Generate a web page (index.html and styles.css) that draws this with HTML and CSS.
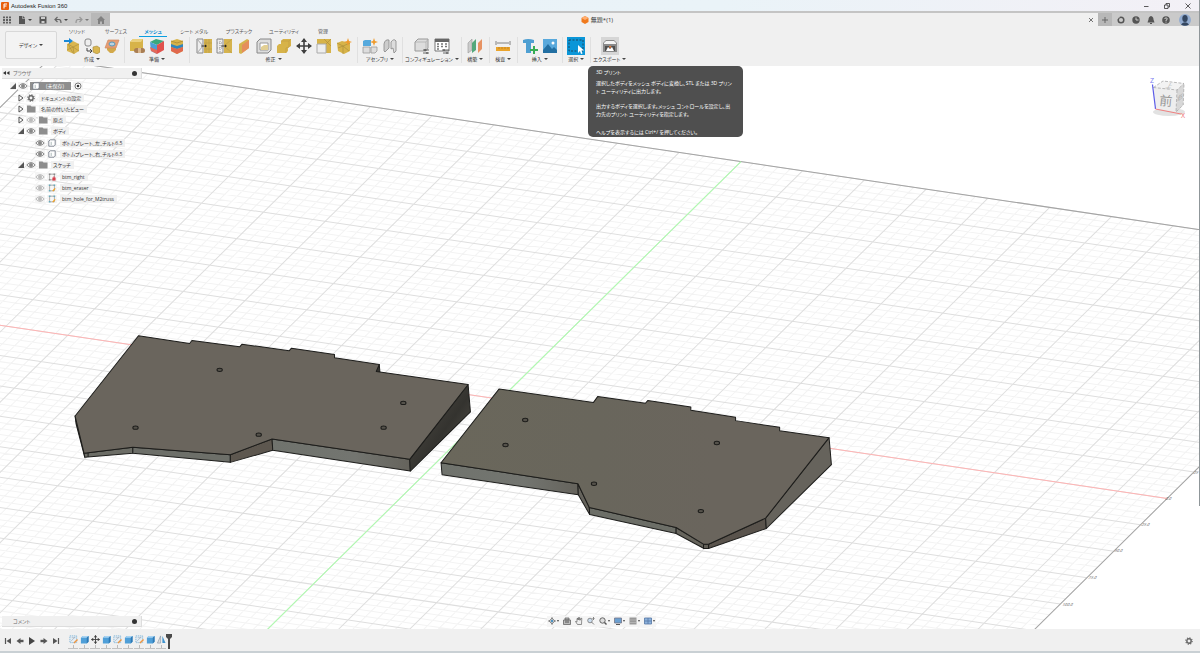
FILE: index.html
```html
<!DOCTYPE html>
<html lang="ja">
<head>
<meta charset="utf-8">
<title>Autodesk Fusion 360</title>
<link rel="stylesheet" href="styles.css">
</head>
<body>
<svg class="defs" aria-hidden="true">
  <defs>
    <linearGradient id="sideDark" x1="0" y1="0" x2="1" y2="1"><stop offset="0" stop-color="#55524b"/><stop offset=".55" stop-color="#34332f"/><stop offset="1" stop-color="#5c5952"/></linearGradient>
    <linearGradient id="topRight" x1="0" y1="0" x2="1" y2="0"><stop offset="0" stop-color="#6a675b"/><stop offset=".4" stop-color="#69665c"/><stop offset=".7" stop-color="#6a655d"/></linearGradient>
    <linearGradient id="front" x1="0" y1="0" x2="1" y2="0"><stop offset="0" stop-color="#70736d"/><stop offset=".6" stop-color="#737570"/><stop offset="1" stop-color="#65635c"/></linearGradient>
  </defs>
  <symbol id="eye" viewBox="0 0 10 8"><path d="M.8 4Q5-.8 9.200 4 5 8.800.8 4z" fill="none" stroke="currentColor"/><circle cx="5" cy="4" r="2" fill="currentColor"/></symbol>
  <symbol id="folder" viewBox="0 0 10 8"><path d="M1 .5h3.500l1 1H9.500V7.500H1z" fill="#8d8d8d"/></symbol>
  <symbol id="gear" viewBox="0 0 10 10"><circle cx="5" cy="5" r="2.700" fill="none" stroke="#666" stroke-width="1.800"/><circle cx="5" cy="5" r="4" fill="none" stroke="#666" stroke-width="1.400" stroke-dasharray="1.500 1.640"/></symbol>
  <symbol id="closed" viewBox="0 0 6 8"><path d="M1 1l4 3-4 3z" fill="#fff" stroke="#555"/></symbol>
  <symbol id="open" viewBox="0 0 6 8"><path d="M6 1v6H0z" fill="#555"/></symbol>
  <symbol id="body" viewBox="0 0 10 10"><path d="M1 2.500L3 1h6v6.500L7.500 9H1z" fill="#fff" stroke="#6a7280"/><path d="M4 3.500v4" stroke="#9aa" fill="none"/></symbol>
  <symbol id="sketch" viewBox="0 0 10 10"><path d="M2 1.500v7h6v-7z" fill="#f7f7f7" stroke="#888" stroke-width=".8"/><path d="M1 .5h2v2H1zM7 .5h2v2H7zM1 7.500h2v2H1z" fill="#6ab"/><path d="M6 9l3-3.500" stroke="#f0a020" stroke-width="1.600"/></symbol>
  <symbol id="sketchlock" viewBox="0 0 10 10"><path d="M2 1.500v7h6v-7z" fill="#f7f7f7" stroke="#888" stroke-width=".8"/><path d="M1 .5h2v2H1zM7 .5h2v2H7zM1 7.500h2v2H1z" fill="#888"/><path d="M5.500 6h4v3.500h-4z" fill="#d9404c"/><path d="M6.500 6V5h2v1" stroke="#d9404c" fill="none"/></symbol>
  <symbol id="tsketch" viewBox="0 0 10 10"><path d="M1 1h7.500v7.500H1z" fill="#e6eef4" stroke="#7fb4d8" stroke-dasharray="1.500 .8"/><path d="M2 7l5-5M3 3h4" stroke="#9ab" stroke-width=".7"/><path d="M5.500 9l4-4" stroke="#ee9540" stroke-width="1.600"/></symbol>
  <symbol id="extrude" viewBox="0 0 10 10"><path d="M1 3l2-2h6.500v6.500l-2 2H1z" fill="#4f9fd8"/><path d="M1 3l2-2h6.500l-2 2z" fill="#a8d3f2"/><path d="M7.500 3l2-2v6.500l-2 2z" fill="#2f79b4"/></symbol>
  <symbol id="move" viewBox="0 0 16 16"><path d="M8 1v14M1 8h14" stroke="#3f3f3f" stroke-width="1.600"/><path d="M8 0l3 4H5zM8 16l3-4H5zM0 8l4-3v6zM16 8l-4-3v6z" fill="#3f3f3f"/></symbol>
  <symbol id="step" viewBox="0 0 10 8"><path d="M1.500 4l4-3v6z" fill="#555"/><path d="M5 4h3.500" stroke="#555" stroke-width="2.400"/></symbol>
  <symbol id="skip" viewBox="0 0 10 8"><path d="M2.500 1v6" stroke="#555" stroke-width="1.200"/><path d="M3.500 4L8 1v6z" fill="#555"/></symbol>
</svg>

<div class="app">
  <header class="titlebar">
    <svg class="i8" viewBox="0 0 8 8"><rect width="8" height="8" rx="1" fill="#e8600c"/><path d="M3 6.500V2h3M3 4h2.500" stroke="#fff" fill="none"/></svg>
    <span class="apptitle">Autodesk Fusion 360</span>
    <div class="winbtns">
      <button aria-label="最小化"><svg class="i8" viewBox="0 0 8 8"><path d="M2 4.500h4.500" stroke="#333" stroke-width=".8"/></svg></button>
      <button aria-label="元に戻す"><svg class="i8" viewBox="0 0 8 8"><path d="M1.500 3h3.500v3.500H1.500zM3 3V1.500h3.500V5H5" stroke="#333" stroke-width=".8" fill="none"/></svg></button>
      <button aria-label="閉じる"><svg class="i8" viewBox="0 0 8 8"><path d="M1.500 1.500l5 5M6.500 1.500l-5 5" stroke="#333" stroke-width=".8"/></svg></button>
    </div>
  </header>

  <div class="tabstrip">
    <div class="quick">
      <button aria-label="データ パネル"><svg class="i8" viewBox="0 0 8 8"><path d="M1 .5v7M4 .5v7M7 .5v7" stroke="#555" stroke-width="1.800" stroke-dasharray="1.800 .8"/></svg></button>
      <button class="drop" aria-label="ファイル"><svg class="i8" viewBox="0 0 8 8"><path d="M1 0h4l2 2v6H1z" fill="#555"/><path d="M4.500 0v2.500H7" stroke="#ccc" stroke-width=".6" fill="none"/></svg><i class="caret"></i></button>
      <button aria-label="保存"><svg class="i8" viewBox="0 0 8 8"><path d="M.5.500h7v7h-7z" fill="#555"/><path d="M2 1h4v2H2zM2.500 5h3v2h-3z" fill="#ccc"/></svg></button>
      <button class="drop" aria-label="元に戻す"><svg class="i8" viewBox="0 0 8 8"><path d="M3.500 1L1 3.500 3.500 6M1 3.500h4Q7 3.500 7 7" stroke="#666" stroke-width="1.200" fill="none"/></svg><i class="caret"></i></button>
      <button class="drop faded" aria-label="やり直し"><svg class="i8" viewBox="0 0 8 8"><path d="M4.500 1L7 3.500 4.500 6M7 3.500H3Q1 3.500 1 7" stroke="#777" stroke-width="1.200" fill="none"/></svg><i class="caret"></i></button>
    </div>
    <button class="home" aria-label="ホーム"><svg class="i8" viewBox="0 0 8 8"><path d="M4 0l4 4H7v4H5V5.500H3V8H1V4H0z" fill="#808080"/></svg></button>
    <div class="doctab">
      <span class="docname"><svg class="i8" viewBox="0 0 8 8"><path d="M4 0l3.500 2v4L4 8 .5 6V2z" fill="#f07a1e"/><path d="M4 0l3.500 2L4 4 .5 2z" fill="#ffae70"/></svg>無題*(1)</span>
      <button class="closetab" aria-label="タブを閉じる"><svg class="i8" viewBox="0 0 8 8"><path d="M2 2l4 4M6 2L2 6" stroke="#555" stroke-width=".8"/></svg></button>
    </div>
    <button class="plus" aria-label="新規"><svg class="i8" viewBox="0 0 8 8"><path d="M4 1v6M1 4h6" stroke="#666"/></svg></button>
    <div class="account">
      <button aria-label="拡張機能"><svg class="i8" viewBox="0 0 8 8"><circle cx="4" cy="4" r="2.800" fill="none" stroke="#555" stroke-width="1.500"/><path d="M0 3l3-2.500" stroke="#ccc"/></svg></button>
      <button aria-label="ジョブ"><svg class="i8" viewBox="0 0 8 8"><circle cx="4" cy="4" r="3.700" fill="#555"/><path d="M4 1.500V4h2.500" stroke="#ccc" fill="none"/></svg></button>
      <button aria-label="通知"><svg class="i8" viewBox="0 0 8 8"><path d="M4 0q2.500.5 2.500 3.500L7.500 6.500H.5L1.500 3.500Q1.500.500 4 0zM3 7h2v1H3z" fill="#555"/></svg></button>
      <button aria-label="ヘルプ"><svg class="i8" viewBox="0 0 8 8"><circle cx="4" cy="4" r="3.800" fill="#555"/><path d="M2.700 3Q3 1.800 4 1.800t1.300 1.100Q5.300 3.700 4 4.200V5M4 5.600v1" stroke="#ddd" stroke-width=".9" fill="none"/></svg></button>
      <button class="avatar" aria-label="アカウント"><svg viewBox="0 0 12 12"><circle cx="6" cy="6" r="6" fill="#93acd0"/><ellipse cx="6" cy="4.500" rx="2.700" ry="3.500" fill="#34465f"/><path d="M2 10.500Q6 6 10 10.500 6 13 2 10.500z" fill="#34465f"/></svg></button>
    </div>
  </div>

  <div class="toolbar">
    <button class="workspace">デザイン<i class="caret"></i></button>
    <div class="ribbon">
      <nav class="tabs">
        <button class="w38">ソリッド</button><button class="w40">サーフェス</button><button class="w34 active">メッシュ</button><button class="w48">シート メタル</button><button class="w42">プラスチック</button><button class="w48">ユーティリティ</button><button class="w30">管理</button>
      </nav>
      <div class="groups">
        <section class="group">
          <div class="icons">
            <button aria-label="メッシュを挿入"><svg viewBox="0 0 16 16"><path d="M3 6l6-3 6 3v7l-5 3-7-3z" fill="#d9b650"/><path d="M4 6l5 3 6-3M9 9l1 7M4 6l5 9M9 9l6 4M3 12l6-3" stroke="#a98c3a" stroke-width=".6" fill="none"/><path d="M0 3h7" stroke="#1989d8" stroke-width="2"/><path d="M5 0l4 3-4 3z" fill="#1989d8"/></svg></button>
            <button aria-label="テッセレート"><svg viewBox="0 0 16 16"><rect x="1" y="1" width="6" height="7" rx="2" fill="#eee" stroke="#888"/><path d="M3 10v3h4M6 11l2 2-2 2" stroke="#444" fill="none"/><path d="M9 9l4-1 3 2v4l-3 2-4-2z" fill="#d9b650" stroke="#a58737" stroke-width=".6"/></svg></button>
            <button aria-label="メッシュ断面"><svg viewBox="0 0 16 16"><path d="M3 8h9v4l-3 3H6l-3-3z" fill="#d3a94b"/><path d="M4 2h11l-3 8H1z" fill="#e79d74" stroke="#d08a60" stroke-width=".7"/><ellipse cx="8" cy="6" rx="3" ry="2" fill="#bcd2de" stroke="#5597ba"/></svg></button>
          </div><span class="glabel">作成<i class="caret"></i></span>
        </section>
        <section class="group">
          <div class="icons">
            <button aria-label="修復"><svg viewBox="0 0 16 16"><path d="M1 4l3-3h10v9l-2 3H1z" fill="#d7b349"/><path d="M1 4l3-3h10l-2 3z" fill="#ead07e"/><rect x="5" y="10" width="11" height="5" rx="2.500" fill="#a97e53"/><path d="M9 10h3v5H9z" fill="#d9b68d"/></svg></button>
            <button aria-label="面グループを生成"><svg viewBox="0 0 16 16"><path d="M1 4l6-3 8 2-7 4z" fill="#3aa87d"/><path d="M1 4l7 3v9l-6-3z" fill="#4b9fd5"/><path d="M8 7l7-4v9l-7 4z" fill="#e0524c"/><path d="M1 9l7 3v4l-6-3z" fill="#e26a5b"/></svg></button>
            <button aria-label="面グループを結合"><svg viewBox="0 0 16 16"><path d="M2 3l6-2 6 2v10l-6 3-6-3z" fill="#d7b349"/><path d="M2 6l6 2 6-2v3l-6 2-6-2z" fill="#3186bd"/><path d="M2 9l6 2 6-2v4l-6 3-6-3z" fill="#e0684e"/><path d="M2 3l6 2 6-2" stroke="#a48431" stroke-width=".7" fill="none"/></svg></button>
          </div><span class="glabel">準備<i class="caret"></i></span>
        </section>
        <section class="group wide">
          <div class="icons">
            <button aria-label="リメッシュ"><svg viewBox="0 0 16 16"><path d="M1 1h6v14H1z" fill="#eee" stroke="#888"/><path d="M1 1l6 7-6 7" stroke="#aaa" fill="none"/><path d="M8 1h8v14H8z" fill="#d5b34e"/><path d="M10 1v14M13 1v14M8 5h8M8 11h8" stroke="#b99c46" stroke-width=".6"/><path d="M5 8h4" stroke="#222" stroke-width=".8"/><path d="M9 6.500L11 8 9 9.500z" fill="#222"/></svg></button>
            <button aria-label="削減"><svg viewBox="0 0 16 16"><path d="M1 1h6v14H1z" fill="#eee" stroke="#888"/><path d="M4 1v14M1 5h6M1 10h6" stroke="#999" stroke-dasharray="1 1" fill="none"/><path d="M8 1h8v14H8z" fill="#d5b34e"/><path d="M16 1L8 8l8 7" stroke="#b99c46" stroke-width=".6" fill="none"/><path d="M5 8h4" stroke="#222" stroke-width=".8"/><path d="M9 6.500L11 8 9 9.500z" fill="#222"/></svg></button>
            <button aria-label="平面切断"><svg viewBox="0 0 16 16"><path d="M3 6l8-5 2 1v8l-8 6-2-1z" fill="#d5b34e"/><path d="M6 7l7-5v8l-7 5z" fill="#e58e5c"/></svg></button>
            <button aria-label="シェル"><svg viewBox="0 0 16 16"><path d="M1 4l3-3h11v11l-3 3H1z" fill="#ddd" stroke="#888"/><path d="M4 5h8v7H4z" fill="#fff" stroke="#999"/><path d="M5 12V9l3-2h4v5z" fill="#e2cf94"/></svg></button>
            <button aria-label="結合"><svg viewBox="0 0 16 16"><path d="M5 3l2-2h8v7l-3 2v3l-2 2H1V8l2-2h2z" fill="#d7b349"/><path d="M5 3h8l2-2M13 3v6l-3 1v5" stroke="#c29f42" stroke-width=".7" fill="none"/></svg></button>
            <button aria-label="移動"><svg viewBox="0 0 16 16"><use href="#move"/></svg></button>
            <button aria-label="尺度"><svg viewBox="0 0 16 16"><path d="M1 1h14v14H1z" fill="#d7b349"/><path d="M1 6h9v9H1z" fill="#eee" stroke="#aaa"/><path d="M8 1l7 7M10 6l5-5" stroke="#a98c3a" stroke-width=".6"/></svg></button>
            <button aria-label="変換"><svg viewBox="0 0 16 16"><path d="M1 5l5-2 8 2v8l-6 3-6-3z" fill="#d7b349"/><path d="M1 5l6 3 7-3M7 8v8M2 10l5-2 6 5" stroke="#ac8f3c" stroke-width=".7" fill="none"/><path d="M12 0l1 3 3 1-3 1-1 3-1-3-3-1 3-1z" fill="#ef9b2d"/></svg></button>
          </div><span class="glabel">修正<i class="caret"></i></span>
        </section>
        <section class="group">
          <div class="icons">
            <button aria-label="新規コンポーネント"><svg viewBox="0 0 16 16"><path d="M1 3l2-1h6v6H1z" fill="#55a9dd"/><path d="M1 9h7v6H1zM9 9h6v4l-2 2H9z" fill="#ddd" stroke="#999" stroke-width=".8"/><path d="M12 0l1 3 3 1-3 1-1 3-1-3-3-1 3-1z" fill="#ef9b2d"/></svg></button>
            <button aria-label="ジョイント"><svg viewBox="0 0 16 16"><path d="M2 6q1-5 5-4v8l-4 4-1-1z" fill="#ccc" stroke="#888" stroke-width=".8"/><path d="M9 4q3-4 5-1v10l-2 2-1-5-2 1z" fill="#ddd" stroke="#888" stroke-width=".8"/></svg></button>
          </div><span class="glabel">アセンブリ<i class="caret"></i></span>
        </section>
        <section class="group tight">
          <div class="icons">
            <button aria-label="設定を作成"><svg viewBox="0 0 16 16"><path d="M1 4l3-3h10v9l-2 3H1z" fill="#ddd" stroke="#999"/><path d="M1 4h11l2-3M12 4v9" stroke="#aaa" stroke-width=".7" fill="none"/><path d="M9 12h6M9 15h6" stroke="#444" stroke-width=".8"/><path d="M11 11v2M13 14v2" stroke="#444"/></svg></button>
            <button aria-label="テーブル"><svg viewBox="0 0 16 16"><path d="M1 1h14v12H1z" fill="#fff" stroke="#777"/><path d="M1 1h14v3H1z" fill="#666"/><path d="M3 6h2M7 6h2M11 6h2M3 8.500h2M7 8.500h2M11 8.500h2M3 11h2" stroke="#777" stroke-width="1.300"/><path d="M8 12h7M9 15h6" stroke="#444" stroke-width=".8"/><path d="M10 11v2M13 14v2" stroke="#444"/></svg></button>
          </div><span class="glabel">コンフィギュレーション<i class="caret"></i></span>
        </section>
        <section class="group">
          <div class="icons"><button aria-label="オフセット平面"><svg viewBox="0 0 16 16"><path d="M1 5l4-4v11l-4 3z" fill="#ccc" stroke="#999" stroke-width=".6"/><path d="M5 5l4-4v11l-4 3z" fill="#53a87c"/><path d="M11 5l4-4v10l-4 4z" fill="#e79363"/></svg></button></div><span class="glabel">構築<i class="caret"></i></span>
        </section>
        <section class="group">
          <div class="icons"><button aria-label="計測"><svg viewBox="0 0 16 16"><path d="M1 3v4M15 3v4M2 5h12" stroke="#666" stroke-width=".8"/><path d="M1 9h14v4H1z" fill="#eaa42c"/><path d="M4 9v2M7 9v2M10 9v2M13 9v2" stroke="#b5791c" stroke-width=".7"/></svg></button></div><span class="glabel">検査<i class="caret"></i></span>
        </section>
        <section class="group">
          <div class="icons">
            <button aria-label="部品を挿入"><svg viewBox="0 0 16 16"><path d="M1 2q5-2 11 0v3H9v10H4V5H1z" fill="#4e9fd2"/><path d="M12 8v8M8 12h8" stroke="#37ad54" stroke-width="2"/></svg></button>
            <button aria-label="キャンバス"><svg viewBox="0 0 16 16"><path d="M1 1h14v14H1z" fill="#59a9dc"/><path d="M1 12l5-6 4 5 2-2 3 3v3H1z" fill="#226fa2"/><circle cx="11" cy="5" r="1.500" fill="#fff"/></svg></button>
          </div><span class="glabel">挿入<i class="caret"></i></span>
        </section>
        <section class="group">
          <div class="icons"><button class="selected" aria-label="選択"><svg viewBox="0 0 18 18"><path d="M2 3h14v11H2z" fill="none" stroke="#234" stroke-width=".8" stroke-dasharray="2 1.500"/><path d="M11 8v8l2-2 1 3 1.500-.6-1-2.900H17z" fill="#fff"/></svg></button></div><span class="glabel">選択<i class="caret"></i></span>
        </section>
        <section class="group">
          <div class="icons"><button class="hovered" aria-label="3D プリント"><svg viewBox="0 0 18 18"><path d="M2 6l3-3h8l3 3v9H2z" fill="#8a8a8a"/><path d="M3 6l2-2h8l2 2v1H3z" fill="#f4f4f4"/><path d="M4 9h10v5H4z" fill="#4f4f4f"/><path d="M5 14l2-4 2 2 2-2 2 4z" fill="#fff"/><path d="M8 9h2.500L9 12z" fill="#e37534"/></svg></button></div><span class="glabel">エクスポート<i class="caret"></i></span>
        </section>
      </div>
    </div>
  </div>

  <main class="workarea">
    <svg class="scene" viewBox="0 67 1200 562" preserveAspectRatio="xMidYMid slice">
      <path id="minor" class="minor"/><path id="major" class="major"/>
      <path id="border" class="border"/>
      <path id="xaxis" class="xaxis"/><path id="yaxis" class="yaxis"/>
      <g class="ticks">
        <text transform="translate(1164 500) skewX(-30)">0.0</text>
        <text transform="translate(1140 526) skewX(-30)">25.0</text>
        <text transform="translate(1113 552) skewX(-30)">50.0</text>
        <text transform="translate(1087 579) skewX(-30)">75.0</text>
        <text transform="translate(1061 606) skewX(-30)">100.0</text>
        <text transform="translate(1192 474) skewX(-30)">25</text>
      </g>
      <g class="solid" transform="translate(61 321) scale(.33333)">
        <path fill="#5f5c55" d="M45 286L72 398 74 409 48 310z"/>
        <path fill="#6c6d66" d="M72 398L218 380V398L74 410z"/>
        <path fill="#6d6f69" d="M218 380L510 402V425L218 398z"/>
        <path fill="#5d574f" d="M510 402L635 355 637 389 510 425z"/>
        <path fill="url(#front)" d="M635 355L1047 416 1049 451 637 389z"/>
        <path fill="url(#sideDark)" d="M1222 192L1229 274 1049 451 1047 416z"/>
        <path fill="#34332f" d="M956 132L958 155 944 152z"/>
        <path fill="#6a655d" d="M235 46L388 69 395 60 538 79 545 71 686 91 693 83 822 102V112L956 132 947 153 1222 192 1047 416 635 355 510 402 218 380 72 398 45 286z"/>
        <path d="M84 397v12" fill="none"/>
        <g class="holes"><ellipse cx="478" cy="148" rx="8" ry="5"/><ellipse cx="226" cy="321" rx="8" ry="5"/><ellipse cx="595" cy="342" rx="8" ry="5"/><ellipse cx="1028" cy="247" rx="8" ry="5"/><ellipse cx="969" cy="321" rx="8" ry="5"/></g>
      </g>
      <g class="solid" transform="translate(430 375) scale(.33333)">
        <path fill="url(#front)" d="M34 264L444 327 445 360 37 300z"/>
        <path fill="#65635c" d="M444 327L478 398 479 419 445 360z"/>
        <path fill="#6c6e67" d="M478 398L738 458V476L479 419z"/>
        <path fill="#66645c" d="M738 458L820 508V520L738 476z"/>
        <path fill="#625f57" d="M820 508H835V521H820z"/>
        <path fill="#59534c" d="M835 508L1006 430 1008 461 835 521z"/>
        <path fill="#66635c" d="M1196 189L1203 270 1008 461 1006 430z"/>
        <path fill="url(#topRight)" d="M208 43L490 84 503 66 646 86 653 78 782 97V107L916 128V138L1048 158V168L1196 189 1006 430 835 508H820L738 458 478 398 444 327 34 264z"/>
        <g class="holes"><ellipse cx="286" cy="136" rx="8" ry="5"/><ellipse cx="227" cy="211" rx="8" ry="5"/><ellipse cx="492" cy="327" rx="8" ry="5"/><ellipse cx="860" cy="205" rx="8" ry="5"/><ellipse cx="812" cy="409" rx="8" ry="5"/></g>
      </g>
    </svg>

    <div class="overlay">
      <aside class="browser">
        <div class="panelhead"><svg class="i8" viewBox="0 0 8 8"><path d="M4 2v4L1 4zM7.500 2v4l-3-2z" fill="#333"/></svg><span>ブラウザ</span><i class="dot"></i></div>
        <ul class="tree">
          <li><div class="row"><svg class="tri"><use href="#open"/></svg><svg class="ic dark"><use href="#eye"/></svg><span class="rootname"><svg class="ic"><use href="#body"/></svg>(未保存)</span><svg class="ic" viewBox="0 0 8 8"><circle cx="4" cy="4" r="3" fill="#fff" stroke="#444" stroke-width=".7"/><circle cx="4" cy="4" r="1.300" fill="#333"/></svg></div>
            <ul>
              <li><div class="row"><svg class="tri"><use href="#closed"/></svg><svg class="ic"><use href="#gear"/></svg><span>ドキュメントの設定</span></div></li>
              <li><div class="row"><svg class="tri"><use href="#closed"/></svg><svg class="ic"><use href="#folder"/></svg><span>名前の付いたビュー</span></div></li>
              <li><div class="row"><svg class="tri"><use href="#closed"/></svg><svg class="ic faint"><use href="#eye"/></svg><svg class="ic"><use href="#folder"/></svg><span>原点</span></div></li>
              <li><div class="row"><svg class="tri"><use href="#open"/></svg><svg class="ic dark"><use href="#eye"/></svg><svg class="ic"><use href="#folder"/></svg><span>ボディ</span></div>
                <ul class="leaf">
                  <li><div class="row"><svg class="ic dark"><use href="#eye"/></svg><svg class="ic"><use href="#body"/></svg><span>ボトムプレート_左_チルト6.5</span></div></li>
                  <li><div class="row"><svg class="ic dark"><use href="#eye"/></svg><svg class="ic"><use href="#body"/></svg><span>ボトムプレート_右_チルト6.5</span></div></li>
                </ul></li>
              <li><div class="row"><svg class="tri"><use href="#open"/></svg><svg class="ic dark"><use href="#eye"/></svg><svg class="ic"><use href="#folder"/></svg><span>スケッチ</span></div>
                <ul class="leaf">
                  <li><div class="row"><svg class="ic faint"><use href="#eye"/></svg><svg class="ic"><use href="#sketchlock"/></svg><span>btm_right</span></div></li>
                  <li><div class="row"><svg class="ic faint"><use href="#eye"/></svg><svg class="ic"><use href="#sketch"/></svg><span>btm_eraser</span></div></li>
                  <li><div class="row"><svg class="ic faint"><use href="#eye"/></svg><svg class="ic"><use href="#sketch"/></svg><span>btm_hole_for_M2truss</span></div></li>
                </ul></li>
            </ul></li>
        </ul>
      </aside>

      <svg class="cube" viewBox="0 0 46 48">
        <ellipse cx="24" cy="39" rx="16" ry="4" fill="#e2e2e2"/>
        <path d="M8.500 14.500L18 8l21 2.500-7 6.500z" fill="#f3f3f3"/><path d="M8.500 14.500l23.500 2.500-1 22-20.500-3.500z" fill="#eee"/><path d="M32 17l7-6.500-.8 21.500L31 39z" fill="#d8d8d8"/>
        <path d="M8.500 14.500L18 8l21 2.500-7 6.500zM32 17l-1 22 7.200-7 .8-21.500" fill="none" stroke="#aaa" stroke-width=".8" stroke-dasharray="3 1.500"/>
        <text class="cubeface" transform="translate(14 32) rotate(5)">前</text><text class="cubeside" transform="translate(20 15) skewX(-30)">上</text><text class="cubeside" transform="translate(32 29) skewY(-40)">右</text>
        <path d="M7.500 11.500l3 24.500" stroke="#5b5be8" stroke-width="1.200"/><path d="M10.500 36L36 41" stroke="#f08080"/>
        <text class="axis zc" x="5" y="10">Z</text><text class="axis xc" x="36" y="45">X</text>
      </svg>

      <div class="bottomline">
        <div class="panelhead comment"><span>コメント</span><i class="dot"></i></div>
        <div class="navbar">
          <button class="drop" aria-label="オービット"><svg class="i8" viewBox="0 0 8 8"><path d="M4 0v8M0 4h8" stroke="#777" stroke-width=".8"/><path d="M4 1l3 3-3 3-3-3z" fill="none" stroke="#777" stroke-width=".8"/><circle cx="4" cy="4" r="1.200" fill="#4d94c4"/></svg><i class="caret"></i></button>
          <button aria-label="ビュー正面"><svg class="i8" viewBox="0 0 8 8"><path d="M.5 3h7v4.500h-7zM2 1h4v2H2z" fill="#bbb" stroke="#666" stroke-width=".8"/><path d="M2 5h4" stroke="#555"/></svg></button>
          <button aria-label="画面移動"><svg class="i8" viewBox="0 0 8 8"><path d="M2.500 7.500L.5 4.500l1.500.3V1.500h1V3 .8h1V3 .8h1v2.500l1-2h.8L6.500 7.500z" fill="#eee" stroke="#666" stroke-width=".7"/></svg></button>
          <button aria-label="ズーム"><svg class="i8" viewBox="0 0 8 8"><circle cx="3" cy="3.500" r="2.300" fill="#cde" stroke="#777" stroke-width=".8"/><path d="M4.500 5L7 7.500M6.500 3V.5M5.500 1.500l1-1 1 1" stroke="#666" stroke-width=".8" fill="none"/></svg></button>
          <button class="drop" aria-label="フィット"><svg class="i8" viewBox="0 0 8 8"><circle cx="3.500" cy="3.500" r="2.700" fill="#ddd" stroke="#666"/><path d="M5.500 5.500l2 2" stroke="#555" stroke-width="1.400"/></svg><i class="caret"></i></button>
          <button class="drop" aria-label="表示設定"><svg class="i8" viewBox="0 0 8 8"><path d="M.5 1h7v5h-7z" fill="#6b9fd0" stroke="#778" stroke-width=".8"/><path d="M2 7.500h4" stroke="#555"/></svg><i class="caret"></i></button>
          <button class="drop" aria-label="グリッド"><svg class="i8" viewBox="0 0 8 8"><path d="M.5.500h7v7h-7z" fill="#999"/><path d="M.5 3h7M.5 5.500h7" stroke="#c4c4c4" stroke-width=".6"/></svg><i class="caret"></i></button>
          <button class="drop" aria-label="ビューポート"><svg class="i8" viewBox="0 0 8 8"><path d="M.5 1h7v6h-7z" fill="#8db2dc" stroke="#5577a5" stroke-width=".8"/><path d="M4 1v6M.5 4h7" stroke="#5577a5" stroke-width=".8"/></svg><i class="caret"></i></button>
        </div>
      </div>
    </div>
  </main>

  <footer class="timeline">
    <div class="player">
      <button aria-label="最初へ"><svg viewBox="0 0 10 8"><use href="#skip"/></svg></button>
      <button aria-label="前へ"><svg viewBox="0 0 10 8"><use href="#step"/></svg></button>
      <button aria-label="再生"><svg viewBox="0 0 10 8"><path d="M2 0l6 4-6 4z" fill="#444"/></svg></button>
      <button class="flip" aria-label="次へ"><svg viewBox="0 0 10 8"><use href="#step"/></svg></button>
      <button class="flip" aria-label="最後へ"><svg viewBox="0 0 10 8"><use href="#skip"/></svg></button>
    </div>
    <div class="features">
      <span><svg><use href="#tsketch"/></svg></span><span><svg><use href="#extrude"/></svg></span><span><svg><use href="#move"/></svg></span><span><svg><use href="#extrude"/></svg></span><span><svg><use href="#tsketch"/></svg></span><span><svg><use href="#extrude"/></svg></span><span><svg><use href="#tsketch"/></svg></span><span><svg><use href="#extrude"/></svg></span><span><svg viewBox="0 0 10 10"><path d="M4 1v8H.5z" fill="#ddd" stroke="#789" stroke-width=".6"/><path d="M6 1v8h3.500z" fill="#3f93cf"/></svg></span>
    </div>
    <svg class="marker" viewBox="0 0 6 15"><path d="M0 0h6v3L4 5v10H2V5L0 3z" fill="#4a4a4a"/></svg>
    <button class="settings" aria-label="設定"><svg class="i8"><use href="#gear"/></svg></button>
  </footer>

  <div class="tooltip" role="tooltip">
    <p>3D プリント</p>
    <p>選択したボディをメッシュ ボディに変換し、STL または 3D プリン<br>ト ユーティリティに出力します。</p>
    <p>出力するボディを選択します。メッシュ コントロールを設定し、出<br>力先のプリント ユーティリティを指定します。</p>
    <p>ヘルプを表示するには Ctrl+/ を押してください。</p>
  </div>
  <i class="edge"></i>
</div>
<script src="grid.js"></script>
</body>
</html>
```
FILE: styles.css
```css
* { box-sizing: border-box; }
body {
  margin: 0;
  font-family: "Open Sans", "Noto Sans CJK JP", sans-serif;
  font-size: 6px;
  line-height: 8px;
  font-feature-settings: "palt";
  color: #333;
  background: #fff;
}
button { border: 0; padding: 0; margin: 0; background: none; font: inherit; font-feature-settings: inherit; color: inherit; display: flex; align-items: center; justify-content: center; white-space: nowrap; }
svg { display: block; flex: none; }
ul { list-style: none; margin: 0; padding: 0; }
.defs { position: absolute; width: 0; height: 0; }
.i8 { width: 8px; height: 8px; }
.caret { display: inline-block; width: 0; height: 0; border: 2px solid transparent; border-top: 2px solid #444; border-bottom: 0; margin-left: 2px; }
.app { position: relative; display: flex; flex-direction: column; height: 100vh; overflow: hidden; }

.titlebar { display: flex; align-items: center; height: 11px; padding-left: 1px; gap: 2px; background: linear-gradient(90deg, #e9f2f8, #eaf3f8 60%, #f3f0f6); color: #222; font-family: "Liberation Sans", sans-serif; }
.winbtns { display: flex; gap: 13px; margin-left: auto; padding-right: 8px; }

.tabstrip { display: flex; height: 15px; border-top: 2px solid #c4c4c4; background: #cacaca; }
.quick { display: flex; align-items: center; width: 91px; padding-left: 3px; gap: 7px; }
.quick .caret { margin-left: 2px; }
.faded { opacity: .6; }
.home { width: 19px; background: #b8b8b8; }
.doctab { flex: 1; display: flex; align-items: center; background: #f0f0f0; }
.docname { flex: 1; display: flex; justify-content: center; gap: 2px; }
.closetab { width: 14px; }
.plus { width: 14px; background: #b8b8b8; }
.account { display: flex; align-items: center; width: 88px; padding-left: 5px; gap: 7px; }
.avatar { margin-left: 2px; }
.avatar svg { width: 12px; height: 12px; }

.toolbar { display: flex; height: 40px; background: #f0f0f0; }
.workspace { width: 52px; height: 28px; margin: 5px 0 0 5px; border: 1px solid #d8d8d8; border-radius: 2px; background: #f3f3f3; font-size: 5px; }
.tabs { display: flex; height: 11px; padding-left: 1px; color: #555; font-size: 5px; }
.tabs button { padding-bottom: 1px; }
.tabs .active { color: #0a8fd6; font-weight: 700; background: linear-gradient(#0a9fe0, #0a9fe0) bottom center / 28px 1px no-repeat; }
.w30 { width: 30px; } .w34 { width: 34px; } .w38 { width: 38px; } .w40 { width: 40px; } .w42 { width: 42px; } .w48 { width: 48px; }
.groups { display: flex; padding: 0 0 0 3px; }
.group { display: flex; flex-direction: column; align-items: center; min-width: 28px; padding: 0 2px; border-left: 1px solid #e0e0e0; height: 26px; }
.group:first-child { border-left: 0; }
.wide { min-width: 168px; }
.icons { display: flex; height: 18px; }
.icons button { width: 20px; height: 18px; }
.icons svg { width: 16px; height: 16px; }
.icons .selected { width: 18px; background: #0a96d8; }
.icons .hovered { width: 18px; background: #d6d6d6; margin: 0 8px; }
.icons .selected svg, .icons .hovered svg { width: 18px; height: 18px; }
.glabel { display: flex; align-items: center; white-space: nowrap; font-size: 5px; }

.workarea { position: relative; flex: 1; min-height: 0; overflow: hidden; background: #fff; }
.scene { position: absolute; inset: 0; width: 100%; height: 100%; }
.minor, .major, .border, .xaxis, .yaxis { fill: none; stroke-width: 1; }
.minor { stroke: #f3f3f3; }
.major { stroke: #dedede; }
.border { stroke: #a4a4a4; }
.xaxis { stroke: #ffb4b4; }
.yaxis { stroke: #adfdad; }
.ticks { font-size: 4px; fill: #555; }
.solid path { stroke: #1d1d1b; stroke-width: 3; stroke-linejoin: round; }
.holes { fill: #55524b; stroke: #1c1c1a; stroke-width: 3; }

.overlay { position: relative; display: flex; flex-direction: column; justify-content: space-between; height: 100%; padding: 2px 0 2px 2px; }
.panelhead { display: flex; align-items: center; width: 140px; height: 11px; padding: 0 4px 0 0; gap: 3px; background: #f0f0f0; border-bottom: 1px solid #ddd; border-right: 1px solid #ddd; color: #666; font-size: 5px; }
.comment { padding-left: 11px; }
.dot { width: 5px; height: 5px; border-radius: 50%; background: #333; margin-left: auto; }
.tree { padding: 1px 0 0 8px; font-size: 5px; }
.tree ul { padding: 1px 0 0 8px; }
.tree .leaf { padding-left: 17px; }
.row { display: flex; align-items: center; width: max-content; height: 11px; gap: 2px; padding-right: 4px; }
.row span { margin-left: 1px; padding: 0 3px 0 2px; background: #f0f0f0; }
.row > svg { background: #f4f4f4; }
.row .rootname { display: flex; align-items: center; gap: 5px; margin-left: 0; background: #8e8e8e; color: #fff; width: 41px; padding: 0 1px; }
.tri { width: 6px; height: 8px; }
.ic { width: 10px; height: 8px; }
.dark { color: #888; }
.faint { color: #bbb; }

.cube { position: absolute; top: 7px; right: 9px; width: 46px; height: 48px; }
.cubeface { font-size: 13px; fill: #999; }
.cubeside { font-size: 6px; fill: #aaa; }
.axis { font-size: 7px; }
.zc { fill: #7a7af0; } .xc { fill: #f06a6a; }

.bottomline { display: grid; grid-template-columns: 1fr auto 1fr; align-items: center; }
.navbar { grid-column: 2; display: flex; align-items: center; height: 11px; gap: 4px; padding: 0 1px 2px; background: #f5f5f5; }
.navbar .caret { margin-left: 1px; border-left-width: 1px; border-right-width: 1px; }

.timeline { display: flex; align-items: center; height: 24px; padding: 2px 7px 0 3px; border-bottom: 2px solid #c9d0d4; background: #f0f0f0; }
.player { display: flex; gap: 2px; }
.player svg { width: 10px; height: 8px; }
.flip { transform: scaleX(-1); }
.features { display: flex; gap: 1px; margin-left: 7px; padding-top: 2px; }
.features span { display: flex; justify-content: center; width: 10px; height: 14px; background: linear-gradient(#bbb, #bbb) bottom center / 1px 3px no-repeat; box-shadow: 0 1px 0 #c2c2c2, 1px 1px 0 #c2c2c2; clip-path: inset(12px -1px -1px 0); }
.features span { clip-path: none; box-shadow: none; border-bottom: 1px solid #c2c2c2; outline: 0; }
.features svg { width: 9px; height: 9px; }
.marker { width: 6px; height: 15px; }
.settings { margin-left: auto; }

.tooltip { position: absolute; top: 66px; left: 588px; width: 155px; padding: 2px 8px 1px; border-radius: 5px; background: #4f4f4f; color: #fff; font-size: 5px; line-height: 8px; white-space: nowrap; }
.tooltip p { margin: 0 0 7px; }
.tooltip p:first-child { margin-bottom: 3px; }
.tooltip p:nth-child(3) { margin-bottom: 10px; }
.tooltip p:last-child { margin: 0; }
.edge { position: absolute; top: 0; right: 0; width: 1px; height: 506px; background: #8f9699; }
```
FILE: grid.js
```js
// Ground-plane grid: u runs along the X axis, v along the Y axis, in major cells.
const origin = [500.4, 399.8];
const u = [61.65, 9.15];
const v = [26.7, -26.38];
const uMin = -11.2, uMax = 10.8, vMin = -10, vMax = 9;

const at = (a, b) =>
  (origin[0] + a * u[0] + b * v[0]).toFixed(2) + " " +
  (origin[1] + a * u[1] + b * v[1]).toFixed(2);
const line = (a1, b1, a2, b2) => "M" + at(a1, b1) + "L" + at(a2, b2);
const draw = (id, d) => document.getElementById(id).setAttribute("d", d);

let minor = "", major = "";
for (let i = Math.round(uMin * 5); i <= uMax * 5; i++) {
  const d = line(i / 5, vMin, i / 5, vMax);
  if (i % 5) minor += d; else major += d;
}
for (let j = vMin * 5; j <= vMax * 5; j++) {
  const d = line(uMin, j / 5, uMax, j / 5);
  if (j % 5) minor += d; else major += d;
}
draw("minor", minor);
draw("major", major);
draw("border", line(uMin, vMin, uMin, vMax) + line(uMin, vMax, uMax, vMax) + line(uMax, vMax, uMax, vMin));
draw("xaxis", line(uMin, 0, uMax, 0));
draw("yaxis", line(0, vMin, 0, vMax));
```
